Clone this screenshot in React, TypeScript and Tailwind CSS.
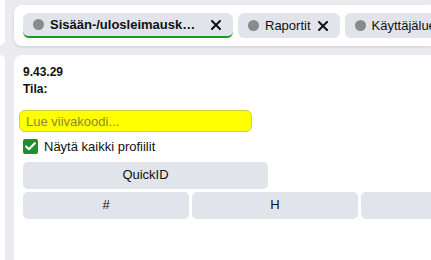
import { Check } from 'lucide-react'

function CloseIcon() {
    return (
        <svg width="10" height="10" viewBox="0 0 10 10" className="shrink-0">
            <path d="M1 1 L9 9 M9 1 L1 9" stroke="#111" strokeWidth="2" strokeLinecap="square" />
        </svg>
    )
}

function Tab({ label, active, closable = true }: { label: string; active?: boolean; closable?: boolean }) {
    return (
        <div
            className={`flex items-center h-[25px] shrink-0 rounded-[6px] bg-[#e1e4eb] pl-[10px] pr-[12px] ${
                active ? 'border-b-2 border-[#1a9a1a] font-bold' : ''
            }`}
        >
            <span className="w-[11px] h-[11px] rounded-full bg-[#8a8a8a] shrink-0" />
            <span className={`ml-[6px] text-[13px] text-[#111] truncate ${active ? 'w-[146px]' : ''}`}>{label}</span>
            {closable && (
                <span className={active ? 'ml-[15px]' : 'ml-[7px]'}>
                    <CloseIcon />
                </span>
            )}
        </div>
    )
}

export default function App() {
    return (
        <div className="w-[431px] h-[260px] overflow-hidden bg-[#ebebef] flex font-['Liberation_Sans',Arial,sans-serif]">
            <div className="w-[5px] shrink-0 flex flex-col">
                <div className="h-[45px] bg-white rounded-br-[6px]" />
                <div className="mt-[10px] flex-1 bg-white rounded-tr-[6px]" />
            </div>

            <div className="ml-[9px] flex-1 min-w-0 flex flex-col">
                <div className="mt-[5px] h-[41px] bg-white rounded-l-[8px] shadow-[0_1px_3px_rgba(0,0,0,0.12)] flex gap-[5px] pl-[9px] pt-[8px] overflow-hidden">
                    <Tab label="Sisään-/ulosleimauskortti" active />
                    <Tab label="Raportit" />
                    <Tab label="Käyttäjäluettelo" />
                </div>

                <div className="mt-[9px] flex-1 bg-white rounded-tl-[8px] pl-[5px] pt-[9px] w-[600px]">
                    <div className="pl-[4px] text-[12px] font-bold text-[#111] leading-[17px]">
                        <div>9.43.29</div>
                        <div>Tila:</div>
                    </div>

                    <input
                        placeholder="Lue viivakoodi..."
                        className="mt-[12px] block w-[233px] h-[22px] rounded-[6px] bg-[#ffff00] border border-[#d6cf3a] px-[6px] text-[13px] placeholder:text-[#8a8a3a] outline-none"
                    />

                    <label className="mt-[5px] ml-[4px] flex items-center gap-[6px] text-[13px] text-[#111]">
                        <span className="w-[15px] h-[15px] rounded-[2px] bg-[#1f8f2e] flex items-center justify-center">
                            <Check size={13} strokeWidth={4} color="white" />
                        </span>
                        Näytä kaikki profiilit
                    </label>

                    <button className="mt-[5px] ml-[4px] w-[245px] h-[27px] rounded-[5px] bg-[#e1e4eb] text-[13px] text-[#111]">
                        QuickID
                    </button>

                    <div className="mt-[3px] ml-[4px] flex gap-[3px]">
                        <button className="w-[166px] h-[27px] rounded-[5px] bg-[#e1e4eb] text-[13px] text-[#111]">#</button>
                        <button className="w-[166px] h-[27px] rounded-[5px] bg-[#e1e4eb] text-[13px] text-[#111]">H</button>
                        <button className="w-[166px] h-[27px] rounded-[5px] bg-[#e1e4eb] text-[13px] text-[#111]"></button>
                    </div>
                </div>
            </div>
        </div>
    )
}
